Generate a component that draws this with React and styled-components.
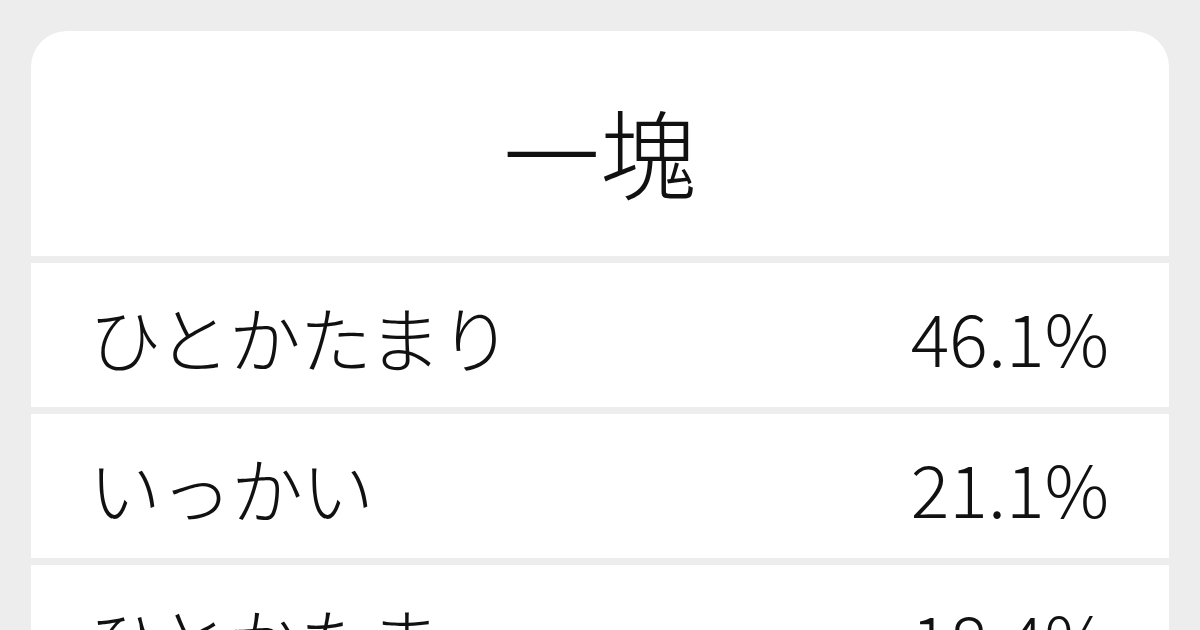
import React from 'react';
import styled, { createGlobalStyle } from 'styled-components';

const GlobalStyle = createGlobalStyle`
    html, body {
        margin: 0;
        padding: 0;
        background: #ededed;
    }
    body {
        font-family: "Noto Sans CJK JP", "Noto Sans", sans-serif;
        font-weight: 300;
        color: #111;
    }`;

const Page = styled.div`
    width: 1200px;
    height: 630px;
    overflow: hidden;
    padding: 31px 31px 0;
    box-sizing: border-box`;

const Card = styled.div`
    display: flex;
    flex-direction: column;
    gap: 7px;
    border-radius: 36px 36px 0 0;
    overflow: hidden`;

const Header = styled.div`
    display: flex;
    align-items: center;
    justify-content: center;
    height: 225px;
    padding-top: 12px;
    box-sizing: border-box;
    background: #fff;
    font-size: 97px;
    line-height: 1`;

const Row = styled.div`
    display: flex;
    align-items: center;
    justify-content: space-between;
    height: 144px;
    padding: 2px 60px 0 58px;
    box-sizing: border-box;
    background: #fff;
    font-size: 72px;
    line-height: 1`;

const Reading = styled.span`
    white-space: nowrap;
    letter-spacing: -1px`;

const Rate = styled.span`
    white-space: nowrap`;

const readings = [
    { kana: 'ひとかたまり', rate: '46.1%' },
    { kana: 'いっかい', rate: '21.1%' },
    { kana: 'ひとかたま', rate: '18.4%' },
];

export default function App() {
    return (
        <Page>
            <GlobalStyle />
            <Card>
                <Header>一塊</Header>
                {readings.map((r) => (
                    <Row key={r.kana}>
                        <Reading>{r.kana}</Reading>
                        <Rate>{r.rate}</Rate>
                    </Row>
                ))}
            </Card>
        </Page>
    );
}
